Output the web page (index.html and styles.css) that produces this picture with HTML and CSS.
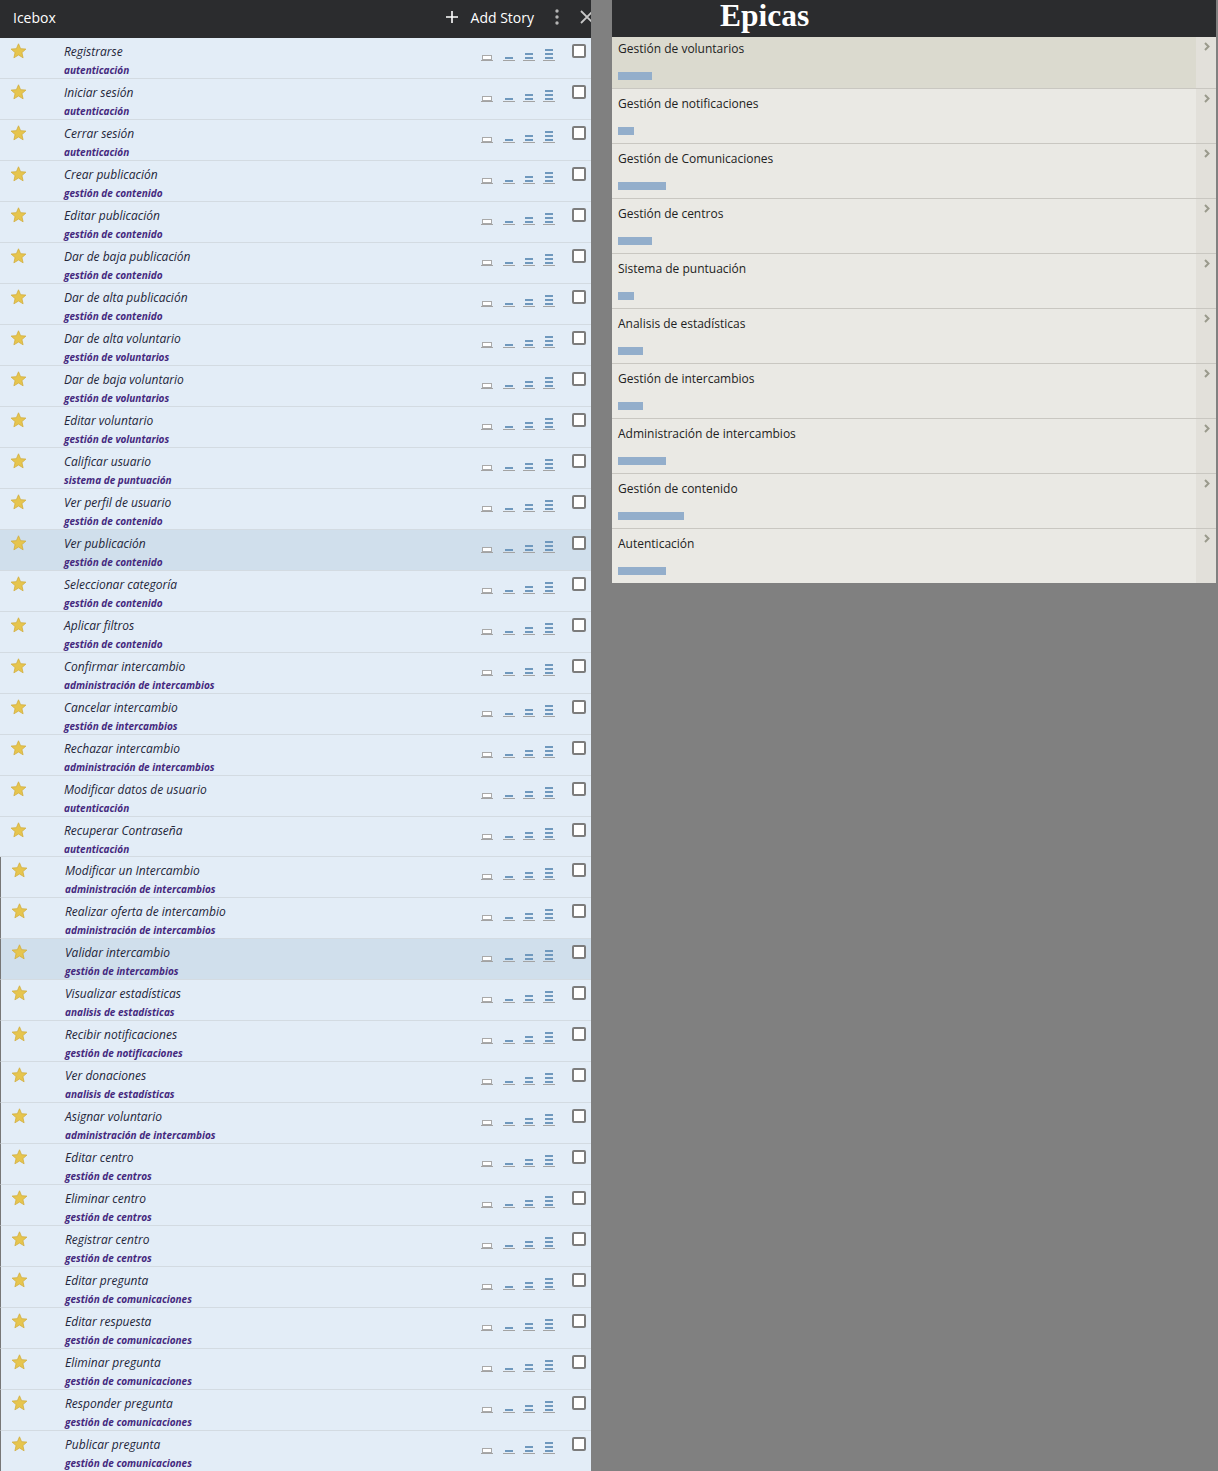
FILE: index.html
```html
<!DOCTYPE html>
<html lang="es">
<head>
<meta charset="utf-8">
<title>Icebox</title>
<link rel="stylesheet" href="styles.css">
</head>
<body>
<div class="board">
  <section class="icebox">
    <header class="ice-head">
      <span class="ice-title">Icebox</span>
      <span class="add">
        <svg class="plus" width="12" height="12" viewBox="0 0 12 12"><path d="M6 0V12M0 6H12" stroke="#fff" stroke-width="1.6"/></svg>
        <span>Add Story</span>
      </span>
      <svg class="kebab" width="4" height="16" viewBox="0 0 4 16"><circle cx="2" cy="2" r="1.7" fill="#b5b5b5"/><circle cx="2" cy="8" r="1.7" fill="#b5b5b5"/><circle cx="2" cy="14" r="1.7" fill="#b5b5b5"/></svg>
      <svg class="close" width="14" height="14" viewBox="0 0 14 14"><path d="M1 1L13 13M13 1L1 13" stroke="#c8c8c8" stroke-width="1.8"/></svg>
    </header>
    <div class="stories" id="stories"></div>
  </section>
  <section class="epics">
    <header class="epic-head"><h1>Epicas</h1></header>
    <div class="epic selected first"><div class="epic-main"><div class="epic-name">Gestión de voluntarios</div><div class="bar" style="width:34px"></div></div><div class="chev"><svg width="6" height="9" viewBox="0 0 6 9"><path d="M1 1L4.5 4.5L1 8" fill="none" stroke="#9a9a8c" stroke-width="2"/></svg></div></div>
    <div class="epic"><div class="epic-main"><div class="epic-name">Gestión de notificaciones</div><div class="bar" style="width:16px"></div></div><div class="chev"><svg width="6" height="9" viewBox="0 0 6 9"><path d="M1 1L4.5 4.5L1 8" fill="none" stroke="#9a9a8c" stroke-width="2"/></svg></div></div>
    <div class="epic"><div class="epic-main"><div class="epic-name">Gestión de Comunicaciones</div><div class="bar" style="width:48px"></div></div><div class="chev"><svg width="6" height="9" viewBox="0 0 6 9"><path d="M1 1L4.5 4.5L1 8" fill="none" stroke="#9a9a8c" stroke-width="2"/></svg></div></div>
    <div class="epic"><div class="epic-main"><div class="epic-name">Gestión de centros</div><div class="bar" style="width:34px"></div></div><div class="chev"><svg width="6" height="9" viewBox="0 0 6 9"><path d="M1 1L4.5 4.5L1 8" fill="none" stroke="#9a9a8c" stroke-width="2"/></svg></div></div>
    <div class="epic"><div class="epic-main"><div class="epic-name">Sistema de puntuación</div><div class="bar" style="width:16px"></div></div><div class="chev"><svg width="6" height="9" viewBox="0 0 6 9"><path d="M1 1L4.5 4.5L1 8" fill="none" stroke="#9a9a8c" stroke-width="2"/></svg></div></div>
    <div class="epic"><div class="epic-main"><div class="epic-name">Analisis de estadísticas</div><div class="bar" style="width:25px"></div></div><div class="chev"><svg width="6" height="9" viewBox="0 0 6 9"><path d="M1 1L4.5 4.5L1 8" fill="none" stroke="#9a9a8c" stroke-width="2"/></svg></div></div>
    <div class="epic"><div class="epic-main"><div class="epic-name">Gestión de intercambios</div><div class="bar" style="width:25px"></div></div><div class="chev"><svg width="6" height="9" viewBox="0 0 6 9"><path d="M1 1L4.5 4.5L1 8" fill="none" stroke="#9a9a8c" stroke-width="2"/></svg></div></div>
    <div class="epic"><div class="epic-main"><div class="epic-name">Administración de intercambios</div><div class="bar" style="width:48px"></div></div><div class="chev"><svg width="6" height="9" viewBox="0 0 6 9"><path d="M1 1L4.5 4.5L1 8" fill="none" stroke="#9a9a8c" stroke-width="2"/></svg></div></div>
    <div class="epic"><div class="epic-main"><div class="epic-name">Gestión de contenido</div><div class="bar" style="width:66px"></div></div><div class="chev"><svg width="6" height="9" viewBox="0 0 6 9"><path d="M1 1L4.5 4.5L1 8" fill="none" stroke="#9a9a8c" stroke-width="2"/></svg></div></div>
    <div class="epic last"><div class="epic-main"><div class="epic-name">Autenticación</div><div class="bar" style="width:48px"></div></div><div class="chev"><svg width="6" height="9" viewBox="0 0 6 9"><path d="M1 1L4.5 4.5L1 8" fill="none" stroke="#9a9a8c" stroke-width="2"/></svg></div></div>
  </section>
</div>
<script src="app.js"></script>
</body>
</html>
```
FILE: styles.css
```css
html, body { margin: 0; padding: 0; }
body {
  background: #808080;
  font-family: "Open Sans", "Noto Sans", sans-serif;
  height: 1471px;
  overflow: hidden;
}
.board { display: flex; align-items: flex-start; }

/* Icebox panel */
.icebox { width: 591px; flex: none; display: flex; flex-direction: column; overflow: hidden; }
.ice-head {
  height: 38px; box-sizing: border-box; padding-bottom: 4px;
  background: #2b2c2e; color: #fff;
  display: flex; align-items: center; font-size: 14px;
  white-space: nowrap;
}
.ice-title { margin-left: 13px; flex: 1; }
.add { display: flex; align-items: center; }
.plus { margin-right: 13px; }
.kebab { margin-left: 21px; flex: none; }
.close { margin-left: 21px; flex: none; margin-right: -3px; }

.stories { display: flex; flex-direction: column; }
.row {
  height: 40px; border-bottom: 1px solid #d3dbe2;
  background: #e3edf7; display: flex; align-items: flex-start;
}
.row.hl { background: #d0dfec; }
.row.short { height: 39px; }
.row.moved { border-left: 1px solid #777; }
.star { margin: 5px 0 0 10px; flex: none; }
.text { margin-left: 37px; flex: 1; padding-top: 5px; }
.title {
  font-style: italic; font-size: 12px; line-height: 17px;
  color: #23263a;
}
.label {
  font-style: italic; font-weight: 700; font-size: 10px; line-height: 13px;
  margin-top: 4px; color: #45297e; letter-spacing: 0;
}
.ests { display: flex; margin-top: 8px; flex: none; }
.est {
  width: 12px; height: 13px; padding-bottom: 1px;
  border-bottom: 1px solid #a3a3a3;
  display: flex; flex-direction: column; align-items: center; justify-content: flex-end;
  gap: 2px; margin-right: 8px;
}
.est.e0 { margin-right: 10px; padding-bottom: 0; height: 14px; }
.est.e3 { margin-right: 0; }
.bar-s { width: 8px; height: 2px; background: #6f98bd; }
.box { width: 8px; height: 3px; border: 1px solid #a9a9a9; background: #fff; }
.check {
  width: 10px; height: 10px; border: 2px solid #7c7c7c; border-radius: 2px;
  background: #fff; margin: 6px 5px 0 17px; flex: none;
}

/* Epics panel */
.epics { width: 604px; margin-left: 21px; flex: none; background: #eae9e4; }
.epic-head { height: 37px; background: #2b2c2e; }
.epic-head h1 {
  margin: 0; padding-left: 108px;
  font-family: "Liberation Serif", "DejaVu Serif", serif; font-weight: 700;
  font-size: 31.5px; line-height: 32px; color: #fff;
}
.epic { display: flex; height: 54px; border-bottom: 1px solid #c9c7c1; background: #eae9e4; }
.epic.first { height: 51px; }
.epic.last { border-bottom: 0; height: 54px; }
.epic.selected { background: #dbdacf; }
.epic-main { flex: 1; padding: 6px 0 0 6px; }
.first .epic-main { padding-top: 3px; }
.epic-name { font-size: 12px; line-height: 17px; color: #222; letter-spacing: 0; }
.bar { height: 8px; background: #93aecb; margin-top: 15px; }
.chev { width: 20px; background: #e2e0da; display: flex; justify-content: center; align-items: flex-start; padding-top: 5px; box-sizing: border-box; }
.chev svg { margin-left: 2px; }
```
FILE: app.js
```js
var stories = [
  ["Registrarse","autenticación"],
  ["Iniciar sesión","autenticación"],
  ["Cerrar sesión","autenticación"],
  ["Crear publicación","gestión de contenido"],
  ["Editar publicación","gestión de contenido"],
  ["Dar de baja publicación","gestión de contenido"],
  ["Dar de alta publicación","gestión de contenido"],
  ["Dar de alta voluntario","gestión de voluntarios"],
  ["Dar de baja voluntario","gestión de voluntarios"],
  ["Editar voluntario","gestión de voluntarios"],
  ["Calificar usuario","sistema de puntuación"],
  ["Ver perfil de usuario","gestión de contenido"],
  ["Ver publicación","gestión de contenido"],
  ["Seleccionar categoría","gestión de contenido"],
  ["Aplicar filtros","gestión de contenido"],
  ["Confirmar intercambio","administración de intercambios"],
  ["Cancelar intercambio","gestión de intercambios"],
  ["Rechazar intercambio","administración de intercambios"],
  ["Modificar datos de usuario","autenticación"],
  ["Recuperar Contraseña","autenticación"],
  ["Modificar un Intercambio","administración de intercambios"],
  ["Realizar oferta de intercambio","administración de intercambios"],
  ["Validar intercambio","gestión de intercambios"],
  ["Visualizar estadísticas","analisis de estadísticas"],
  ["Recibir notificaciones","gestión de notificaciones"],
  ["Ver donaciones","analisis de estadísticas"],
  ["Asignar voluntario","administración de intercambios"],
  ["Editar centro","gestión de centros"],
  ["Eliminar centro","gestión de centros"],
  ["Registrar centro","gestión de centros"],
  ["Editar pregunta","gestión de comunicaciones"],
  ["Editar respuesta","gestión de comunicaciones"],
  ["Eliminar pregunta","gestión de comunicaciones"],
  ["Responder pregunta","gestión de comunicaciones"],
  ["Publicar pregunta","gestión de comunicaciones"]
];
var star = '<svg class="star" width="17" height="16" viewBox="0 0 17 16"><path d="M8.5 0.8L10.6 5.7L15.9 6.1L11.9 9.6L13.1 14.8L8.5 12L3.9 14.8L5.1 9.6L1.1 6.1L6.4 5.7Z" fill="#e6c54e" stroke="#d2ad3c" stroke-width="0.8"/></svg>';
var ests = '<div class="ests">' +
  '<div class="est e0"><div class="box"></div></div>' +
  '<div class="est"><div class="bar-s"></div></div>' +
  '<div class="est"><div class="bar-s"></div><div class="bar-s"></div></div>' +
  '<div class="est e3"><div class="bar-s"></div><div class="bar-s"></div><div class="bar-s"></div></div>' +
  '</div>';
var html = '';
stories.forEach(function (s, i) {
  var cls = 'row';
  if (i === 12 || i === 22) cls += ' hl';
  if (i === 19) cls += ' short';
  if (i >= 20) cls += ' moved';
  html += '<div class="' + cls + '">' + star +
    '<div class="text"><div class="title">' + s[0] + '</div><div class="label">' + s[1] + '</div></div>' +
    ests + '<div class="check"></div></div>';
});
document.getElementById('stories').innerHTML = html;
```
